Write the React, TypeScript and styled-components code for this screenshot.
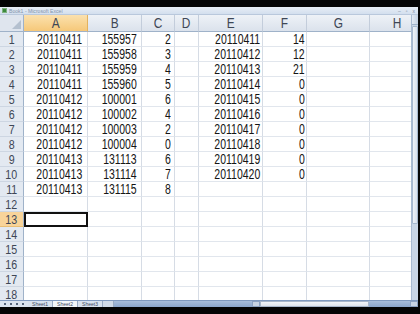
import React from "react";
import styled, { createGlobalStyle, css } from "styled-components";

const GlobalStyle = createGlobalStyle`
  html, body { margin: 0; padding: 0; background: #000; }
  body { font-family: "Liberation Sans", Arial, sans-serif; }
`;

const Frame = styled.div`
  width: 420px;
  height: 314px;
  background: #050505;
  padding: 7px 2px 7px 0;
  box-sizing: border-box;
  overflow: hidden;
`;

const Window = styled.div`
  display: flex;
  flex-direction: column;
  height: 300px;
  background: #fff;
`;

const TitleBar = styled.div`
  height: 8px;
  display: flex;
  align-items: center;
  gap: 2px;
  padding: 0 3px 0 2px;
  background: linear-gradient(#e8eef6, #d3dfee);
  border-bottom: 1px solid #b9c8dc;
  box-sizing: border-box;
`;

const AppIcon = styled.div`
  width: 5px;
  height: 5px;
  background: #3d8a3d;
  border: 1px solid #7fb27f;
  box-sizing: border-box;
`;

const TitleText = styled.span`
  font-size: 6px;
  line-height: 8px;
  color: #8393aa;
  display: inline-block;
  transform: scaleX(0.85);
  transform-origin: left center;
  white-space: nowrap;
`;

const WinControls = styled.div`
  margin-left: auto;
  display: flex;
  gap: 5px;
  font-size: 5px;
  color: #7d8ca3;
`;

const Body = styled.div`
  display: flex;
  height: 285px;
  overflow: hidden;
`;

const Sheet = styled.div`
  width: 411px;
  overflow: hidden;
  display: grid;
  grid-template-columns: 24px 64px 54px 33px 24px 64px 44px 63px 56px;
  grid-template-rows: 17px;
  grid-auto-rows: 15px;
  align-content: start;
`;

const headerBase = css`
  display: flex;
  align-items: center;
  justify-content: center;
  box-sizing: border-box;
  color: #3e4756;
  overflow: hidden;
`;

const Corner = styled.div`
  position: relative;
  background: #dfe5ee;
  border-right: 1px solid #9fb2c9;
  border-bottom: 1px solid #9fb2c9;
  box-sizing: border-box;
  &::after {
    content: "";
    position: absolute;
    right: 2px;
    bottom: 2px;
    border-left: 9px solid transparent;
    border-bottom: 9px solid #b4c0cf;
  }
`;

const ColHeader = styled.div<{ $active?: boolean }>`
  ${headerBase};
  font-size: 14px;
  background: ${(p) =>
    p.$active
      ? "linear-gradient(#fbe1ae, #f6c879)"
      : "linear-gradient(#eef2f7, #dbe2ec)"};
  border-right: 1px solid ${(p) => (p.$active ? "#e3b25e" : "#c3cddb")};
  border-bottom: 1px solid #9fb2c9;
`;

const RowHeader = styled.div<{ $active?: boolean }>`
  ${headerBase};
  font-size: 13px;
  background: ${(p) => (p.$active ? "#f8d49a" : "#e3e9f1")};
  border-right: 1px solid #9fb2c9;
  border-bottom: 1px solid ${(p) => (p.$active ? "#e9be74" : "#cdd6e2")};
`;

const Cell = styled.div<{ $pad?: number; $selected?: boolean }>`
  display: flex;
  align-items: center;
  justify-content: flex-end;
  padding-right: ${(p) => p.$pad ?? 3}px;
  box-sizing: border-box;
  border-right: 1px solid #d6dce5;
  border-bottom: 1px solid #e1e6ed;
  font-size: 14px;
  color: #151515;
  white-space: nowrap;
  overflow: hidden;
  ${(p) =>
    p.$selected &&
    css`
      outline: 2px solid #111;
      outline-offset: -2px;
      position: relative;
      z-index: 1;
    `}
`;

const Squeeze = styled.span<{ $x?: number; $origin?: string }>`
  display: inline-block;
  transform: scaleX(${(p) => p.$x ?? 0.75});
  transform-origin: ${(p) => p.$origin ?? "right"} center;
`;

const VScroll = styled.div`
  width: 7px;
  display: flex;
  flex-direction: column;
  background: #c9d6e6;
  border-left: 1px solid #a9bbd2;
  box-sizing: border-box;
`;

const ScrollArrow = styled.div`
  height: 9px;
  background: linear-gradient(90deg, #e3eaf3, #c2d0e2);
  border-bottom: 1px solid #9fb2c9;
`;

const ScrollThumb = styled.div`
  height: 196px;
  margin-top: 1px;
  background: linear-gradient(90deg, #eef2f8, #d6e0ec);
  border: 1px solid #a6b8ce;
  border-radius: 1px;
`;

const BottomBar = styled.div`
  height: 7px;
  display: flex;
  align-items: stretch;
  background: linear-gradient(#a9bedb, #8ba6cc);
  border-top: 1px solid #7f99bf;
  box-sizing: border-box;
`;

const TabNav = styled.div`
  width: 28px;
  display: flex;
  align-items: center;
  justify-content: space-around;
  padding: 0 2px;
  box-sizing: border-box;
  background: #dbe3ee;
`;

const NavDot = styled.span`
  width: 2px;
  height: 2px;
  background: #55647a;
`;

const SheetTab = styled.div<{ $active?: boolean }>`
  width: 24px;
  display: flex;
  align-items: center;
  justify-content: center;
  font-size: 5px;
  color: #3c4a5e;
  background: ${(p) => (p.$active ? "#f4f6f9" : "#d8e1ed")};
  border-right: 1px solid #98aac3;
  white-space: nowrap;
`;

const NewTab = styled.div`
  width: 10px;
  background: #d1dbe8;
  border-right: 1px solid #98aac3;
`;

const HTrack = styled.div`
  flex: 1;
  display: flex;
  align-items: stretch;
  padding-left: 138px;
`;

const HArrow = styled.div`
  width: 8px;
  background: #c7d3e3;
  border: 1px solid #8ca2c2;
  box-sizing: border-box;
`;

const HThumb = styled.div`
  width: 109px;
  background: linear-gradient(#f3f5f8, #dde3ec);
  border: 1px solid #a8b6c9;
  box-sizing: border-box;
`;

const HFill = styled.div`
  flex: 1;
`;

const cols = ["A", "B", "C", "D", "E", "F", "G", "H"];
const pads = [5, 4, 3, 2, 2, 1, 2, 2];

const rows: string[][] = [
  ["20110411", "155957", "2", "", "20110411", "14"],
  ["20110411", "155958", "3", "", "20110412", "12"],
  ["20110411", "155959", "4", "", "20110413", "21"],
  ["20110411", "155960", "5", "", "20110414", "0"],
  ["20110412", "100001", "6", "", "20110415", "0"],
  ["20110412", "100002", "4", "", "20110416", "0"],
  ["20110412", "100003", "2", "", "20110417", "0"],
  ["20110412", "100004", "0", "", "20110418", "0"],
  ["20110413", "131113", "6", "", "20110419", "0"],
  ["20110413", "131114", "7", "", "20110420", "0"],
  ["20110413", "131115", "8"],
];

const ROW_COUNT = 18;
const SELECTED_ROW = 13;

export default function App() {
  return (
    <>
      <GlobalStyle />
      <Frame>
        <Window>
          <TitleBar>
            <AppIcon />
            <TitleText>Book1 - Microsoft Excel</TitleText>
            <WinControls>
              <span>–</span>
              <span>▫</span>
              <span>x</span>
            </WinControls>
          </TitleBar>
          <Body>
            <Sheet>
              <Corner />
              {cols.map((c) => (
                <ColHeader key={c} $active={c === "A"}>
                  <Squeeze $x={0.85} $origin="center">{c}</Squeeze>
                </ColHeader>
              ))}
              {Array.from({ length: ROW_COUNT }, (_, i) => {
                const n = i + 1;
                const data = rows[i] ?? [];
                return (
                  <React.Fragment key={n}>
                    <RowHeader $active={n === SELECTED_ROW}>
                      <Squeeze $x={0.82} $origin="center">{n}</Squeeze>
                    </RowHeader>
                    {cols.map((c, ci) => (
                      <Cell
                        key={c}
                        $pad={pads[ci]}
                        $selected={n === SELECTED_ROW && c === "A"}
                      >
                        {data[ci] ? <Squeeze>{data[ci]}</Squeeze> : null}
                      </Cell>
                    ))}
                  </React.Fragment>
                );
              })}
            </Sheet>
            <VScroll>
              <ScrollArrow />
              <ScrollThumb />
            </VScroll>
          </Body>
          <BottomBar>
            <TabNav>
              <NavDot />
              <NavDot />
              <NavDot />
              <NavDot />
            </TabNav>
            <SheetTab>Sheet1</SheetTab>
            <SheetTab $active>Sheet2</SheetTab>
            <SheetTab>Sheet3</SheetTab>
            <NewTab />
            <HTrack>
              <HArrow />
              <HThumb />
              <HFill />
              <HArrow />
            </HTrack>
          </BottomBar>
        </Window>
      </Frame>
    </>
  );
}
